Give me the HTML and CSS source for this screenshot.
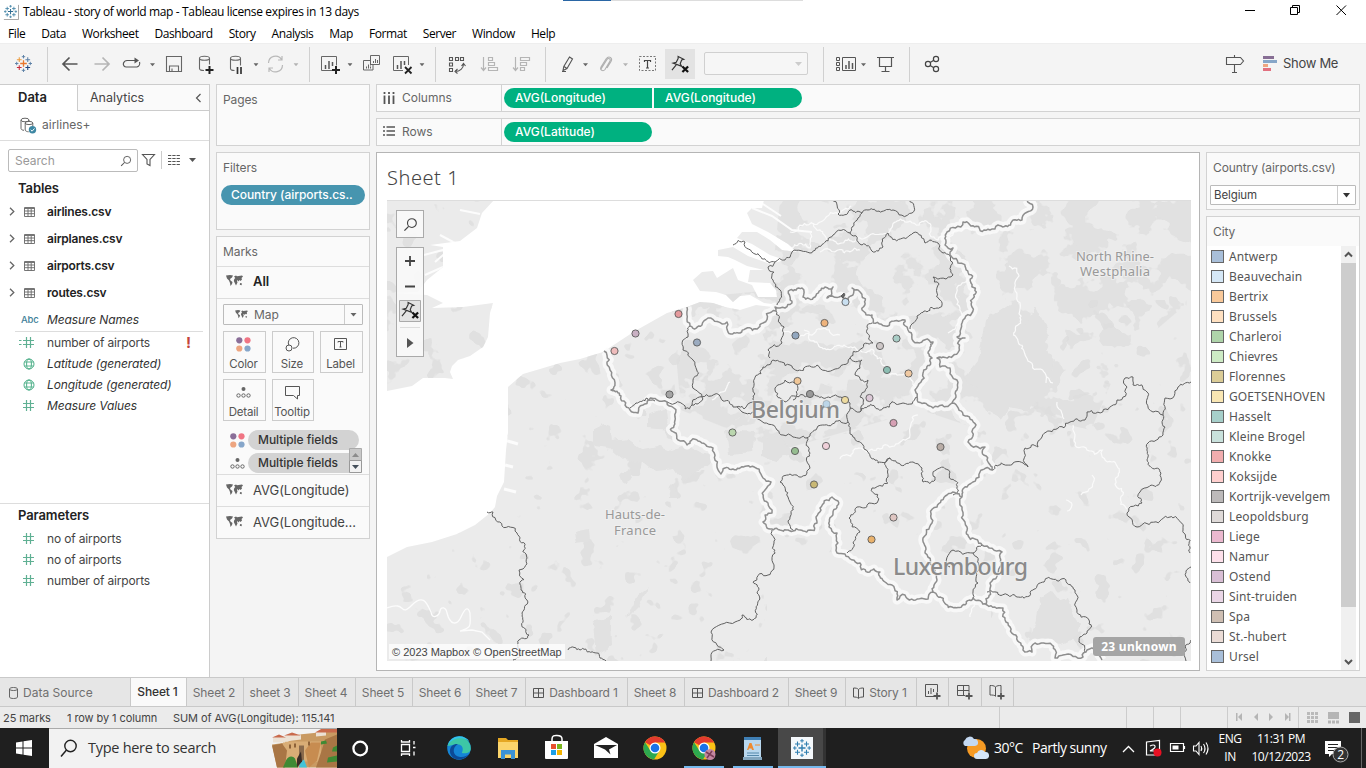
FILE: index.html
```html
<!DOCTYPE html>
<html lang="en">
<head>
<meta charset="utf-8">
<title>Tableau - story of world map</title>
<link rel="stylesheet" href="styles.css">
</head>
<body>
<svg class="defs" width="0" height="0" aria-hidden="true">
  <defs>
    <symbol id="caret" viewBox="0 0 6 4"><path d="M0 0h6L3 3.6z" fill="#666"/></symbol>
    <symbol id="table" viewBox="0 0 11 10"><path d="M.5.5h10v9H.5zM.5 1.5h10M.5 4h10M.5 6.7h10M4 2v7.500M7.200 2v7.500" fill="none" stroke="#666" stroke-width=".9"/></symbol>
    <symbol id="chev" viewBox="0 0 6 9"><path d="M1 .8l3.800 3.700L1 8.200" fill="none" stroke="#666" stroke-width="1.300"/></symbol>
    <symbol id="hash" viewBox="0 0 11 11"><path d="M3.500 0v11M7.500 0v11M0 3.500h11M0 7.500h11" fill="none" stroke="#5fb093" stroke-width="1.200"/></symbol>
    <symbol id="globe" viewBox="0 0 12 12"><g fill="none" stroke="#4caf88"><circle cx="6" cy="6" r="5"/><ellipse cx="6" cy="6" rx="2.400" ry="5"/><path d="M1.500 4h9M1.500 8h9" stroke-width=".9"/></g></symbol>
    <symbol id="world" viewBox="0 0 17 12"><path d="M0 .5l4-.5 3 .5-1 2-2 1.500.500 1.500 2 1.500-.500 2L4.500 11 4 8 3 5.500 1 3.500zM8 1.500l2-1 1 .8 5-.8 1 1-1.500 1.500.500 1.500-1.500 1.500-1-1-1 1.500-1-1.500-.500 1 .500 1.500-1.500 3L9 8.500 7.800 6l.5-2 1-1zM14 8l2 .5-.5 1.800-1.700-.600z" fill="#666"/></symbol>
    <symbol id="detail" viewBox="0 0 15 11"><circle cx="7.500" cy="2" r="2" fill="#666"/><g fill="none" stroke="#666"><circle cx="2.500" cy="8.500" r="1.700"/><circle cx="7.500" cy="8.500" r="1.700"/><circle cx="12.500" cy="8.500" r="1.700"/></g></symbol>
    <symbol id="colors" viewBox="0 0 15 15"><circle cx="3.300" cy="3.300" r="3.100" fill="#8a6e98"/><circle cx="11.500" cy="3.300" r="3.100" fill="#f07584"/><circle cx="3.300" cy="11.500" r="3.100" fill="#eda580"/><circle cx="11.500" cy="11.500" r="3.100" fill="#86a6ca"/></symbol>
    <symbol id="dash" viewBox="0 0 11 10"><path d="M.5.500h10v9H.5zM5.500.500v9M.5 5h10" fill="none" stroke="#555"/></symbol>
    <symbol id="story" viewBox="0 0 11 12"><path d="M.5 1c2 0 4 .2 5 1.500C6.500 1.200 8.500 1 10.500 1v9c-2 0-4 .2-5 1.500C4.500 10.200 2.500 10 .5 10zM5.500 2.500v8.500" fill="none" stroke="#555"/></symbol>
    <symbol id="pin" viewBox="0 0 20 20"><path d="M7.500 1.500l6 3-2.300.7-1.500 4 1.600 2.800L2.200 8.500l3.300-.8 2-4zM5.500 10.500L1 16" fill="none" stroke="#333" stroke-width="1.200"/><path d="M12 12l6 6M18 12l-6 6" stroke="#111" stroke-width="2.300"/></symbol>
    <symbol id="tlogo" viewBox="0 0 18 18"><path d="M9 5.500v7M5.500 9h7" stroke="var(--c1)" stroke-width="1.400"/><path d="M4.500 2.500v5M2 5h5" stroke="var(--c2)" stroke-width="1.100"/><path d="M13.500 2.500v5M11 5h5" stroke="var(--c3)" stroke-width="1.100"/><path d="M4.500 10.800v5M2 13.300h5" stroke="var(--c4)" stroke-width="1.100"/><path d="M13.500 10.800v5M11 13.300h5" stroke="var(--c5)" stroke-width="1.100"/><path d="M9 0v3.600M7.200 1.800h3.600M9 14.400V18M7.200 16.200h3.600M1.800 7.200v3.600M0 9h3.600M16.200 7.200v3.600M14.400 9H18" stroke="var(--c3)"/></symbol>
    <symbol id="chrome" viewBox="0 0 24 24"><circle cx="12" cy="12" r="11.500" fill="#fbc116"/><path d="M12 12L2 6.300A11.500 11.500 0 0 1 22.200 6.500H12z" fill="#e33b2e"/><path d="M2 6.300A11.500 11.500 0 0 0 11 23.500L16.500 14.500 12 12 7.300 14.500z" fill="#2da94f"/><circle cx="12" cy="12" r="5.500" fill="#fff"/><circle cx="12" cy="12" r="4.300" fill="#1a73e8"/></symbol>
    <symbol id="mag" viewBox="0 0 16 16"><circle cx="9.500" cy="6.500" r="4.700" fill="none" stroke="currentColor" stroke-width="1.200"/><path d="M6 10l-4.500 4.500" stroke="currentColor" stroke-width="1.400"/></symbol>
  </defs>
</svg>

<header class="titlebar">
  <svg class="app-icon" viewBox="0 0 18 18"><path d="M0 0h18v18H0z" fill="#fff"/><use href="#tlogo" x="1" y="1" width="15" height="15"/><path d="M17.500 1v16.500H1" fill="none" stroke="#999"/></svg>
  <span class="win-title">Tableau - story of world map - Tableau license expires in 13 days</span>
  <span class="load"></span>
  <svg class="winbtns" width="136" height="24" viewBox="1230 0 136 24"><g fill="none" stroke="#000"><path d="M1245 10.500h10M1290.500 7.500h7v7h-7zM1292.500 7.500v-2h7v7h-2M1336.500 5.500l9.500 9.500M1346 5.500l-9.500 9.500" /></g></svg>
</header>
<nav class="menubar"><span>File</span><span>Data</span><span>Worksheet</span><span>Dashboard</span><span>Story</span><span>Analysis</span><span>Map</span><span>Format</span><span>Server</span><span>Window</span><span>Help</span></nav>

<div class="toolbar">
  <svg class="logo-color" width="48" viewBox="0 43 48 41"><use href="#tlogo" x="15" y="55" width="17" height="17"/><path d="M47.500 47v35" stroke="#d0d0d0"/></svg>
  <svg width="38" viewBox="48 43 38 41"><path d="M77.500 64H63M69.500 57.500L63 64l6.500 6.500" fill="none" stroke="#555" stroke-width="1.700"/></svg>
  <svg width="31" viewBox="86 43 31 41"><path d="M94.500 64H109M102.500 57.500L109 64l-6.500 6.500" fill="none" stroke="#b5b5b5" stroke-width="1.700"/></svg>
  <svg width="43" viewBox="117 43 43 41"><path d="M136 60.500h-8.500a4 4 0 0 0-4 2.500 3 3 0 0 0 3 4H137a4 4 0 0 0 2.500-5" fill="none" stroke="#555" stroke-width="1.200"/><path d="M134.500 57.500l4.500 3-4.500 3z" fill="#555"/><use href="#caret" x="150" y="63" width="5" height="4"/></svg>
  <svg width="30" viewBox="160 43 30 41"><path d="M166.500 56.500h15v15h-15zM169.500 71v-5h9v5M172 71v-2.500" fill="none" stroke="#666" stroke-width="1.100"/></svg>
  <svg width="32" viewBox="190 43 32 41"><g fill="none" stroke="#666" stroke-width="1.100"><ellipse cx="204.500" cy="58.300" rx="5" ry="2"/><path d="M199.500 58.500v10c0 1.300 2 2 4.500 2M209.500 58.500v6"/></g><path d="M209.500 66v8M205.500 70h8" stroke="#222" stroke-width="2"/></svg>
  <svg width="40" viewBox="222 43 40 41"><g fill="none" stroke="#666" stroke-width="1.100"><ellipse cx="235.500" cy="58.300" rx="5" ry="2"/><path d="M230.500 58.500v10c0 1.300 2 2 4 2M240.500 58.500v7"/></g><path d="M237.500 67v7M241 67v7" stroke="#333" stroke-width="1.700"/><use href="#caret" x="253.500" y="63" width="5" height="4"/></svg>
  <svg width="48" viewBox="262 43 48 41"><path d="M268.500 63a7 7 0 0 1 13-3.500M282.500 65a7 7 0 0 1-13 3.500M282 56v4h-4M269 72v-4h4" fill="none" stroke="#b8b8b8" stroke-width="1.200"/><use href="#caret" x="293.500" y="63" width="5" height="4" opacity=".45"/><path d="M309.500 47v35" stroke="#d0d0d0"/></svg>
  <svg width="45" viewBox="310 43 45 41"><path d="M332 70.500h-10.500v-14h15v9" fill="none" stroke="#666"/><path d="M325.500 69v-4M329 69v-8M332.500 66v-4" stroke="#555" stroke-width="1.500"/><path d="M336 66v8M332 70h8" stroke="#222" stroke-width="2"/><use href="#caret" x="347.500" y="63" width="5" height="4"/></svg>
  <svg width="32" viewBox="355 43 32 41"><g fill="none" stroke="#666"><path d="M370.500 65.500v-10h9v9h-9M370 60.500h-6.500v9.500h9.500v-5M373.500 63v-2M375.500 63v-4M377.500 63v-3M366.500 68.500v-2M368.500 68.500v-4M370.500 68.500v-2"/></g></svg>
  <svg width="49" viewBox="387 43 49 41"><path d="M403 70.500h-9.500v-14h15v8.500" fill="none" stroke="#666"/><path d="M397.500 69v-4M401 69v-8M404.500 65v-4" stroke="#555" stroke-width="1.500"/><path d="M405 67l6.500 6.500M411.500 67l-6.500 6.500" stroke="#222" stroke-width="1.800"/><use href="#caret" x="419.500" y="63" width="5" height="4"/><path d="M435.500 47v35" stroke="#d0d0d0"/></svg>
  <svg width="37" viewBox="436 43 37 41"><path d="M449.500 57.500h3v3h-3zM455.500 57.500h3v3h-3zM460.500 57.500h3v3h-3zM449.500 63h3v3h-3zM449.500 68.500h3v3h-3zM455 71.500c5 0 8.500-3 8.500-7.500M461.500 66l2-2.500 2 2.500M457.500 69l-2.500 2.500 2.500 2" fill="none" stroke="#555" stroke-width="1.100"/></svg>
  <svg width="31" viewBox="473 43 31 41"><path d="M483.500 57v13M481 67.500l2.500 3 2.500-3M488.500 57.500h4v3h-4zM488.500 62.500h6v3h-6zM488.500 67.500h9v3h-9z" fill="none" stroke="#b5b5b5" stroke-width="1.200"/></svg>
  <svg width="42" viewBox="504 43 42 41"><path d="M515.500 57v13M513 67.500l2.500 3 2.500-3M520.500 57.500h9v3h-9zM520.500 62.500h6v3h-6zM520.500 67.500h4v3h-4z" fill="none" stroke="#b5b5b5" stroke-width="1.200"/><path d="M545.500 47v35" stroke="#d0d0d0"/></svg>
  <svg width="44" viewBox="546 43 44 41"><path d="M569.500 57l3 2-5.500 9.500-4 2 .800-4zM564 66.500l3 2M562 71.500h4" fill="none" stroke="#555" stroke-width="1.100"/><use href="#caret" x="583" y="63" width="5" height="4"/></svg>
  <svg width="42" viewBox="590 43 42 41"><path d="M601 69l6-9.500c1.500-2 4-.500 3 1.500l-5 8.500c-2 2.500-5.500.5-4-2.500l5-8c3-4 7-1 5 2.500l-4 6.500" fill="none" stroke="#b0b0b0" stroke-width="1.100"/><use href="#caret" x="623" y="63" width="5" height="4" opacity=".45"/></svg>
  <svg width="33" viewBox="632 43 33 41"><path d="M639.500 56.500h16v14h-16z" fill="none" stroke="#777" stroke-dasharray="2 1.500"/><path d="M644.500 62v-1.500h6V62M647.500 60.500v7.500M646 68h3" fill="none" stroke="#444" stroke-width="1.200"/></svg>
  <svg width="32" viewBox="665 43 32 41"><path d="M665 49h30v30h-30z" fill="#e3e3e3"/><use href="#pin" x="671" y="55" width="19" height="19"/></svg>
  <svg width="127" viewBox="697 43 127 41"><rect x="704.500" y="52.500" width="103" height="22" rx="1.500" fill="#f6f6f6" stroke="#d0d0d0"/><path d="M795 62h7l-3.500 4z" fill="#ccc"/><path d="M823.500 47v35" stroke="#d0d0d0"/></svg>
  <svg width="44" viewBox="824 43 44 41"><path d="M836.500 57.500h3v3h-3zM836.500 62.500h3v3h-3zM836.500 67.500h3v3h-3zM842.500 57.500h13v13h-13z" fill="none" stroke="#555"/><path d="M846 69v-4M849 69v-8M852.500 69v-6" stroke="#555" stroke-width="1.500"/><use href="#caret" x="861" y="63" width="5" height="4"/></svg>
  <svg width="42" viewBox="868 43 42 41"><path d="M877 57.500h17M879.500 58v8.500h12V58M885.500 66.500v5M881.500 71.500h8" fill="none" stroke="#555" stroke-width="1.200"/><path d="M909.500 47v35" stroke="#d0d0d0"/></svg>
  <svg width="40" viewBox="910 43 40 41"><g fill="none" stroke="#444" stroke-width="1.200"><circle cx="928" cy="64" r="2.600"/><circle cx="936" cy="59" r="2.600"/><circle cx="936" cy="69" r="2.600"/><path d="M930.200 62.500l3.600-2.200M930.200 65.500l3.600 2.200"/></g></svg>
  <svg class="push" width="30" viewBox="1222 43 30 41"><path d="M1226.500 57.500h14l3 3.500-3 3.500h-14zM1234.500 55v2M1234.500 65v7.500M1232 72.500h5" fill="none" stroke="#555" stroke-width="1.100"/></svg>
  <svg width="31" viewBox="1252 43 31 41"><path d="M1263 56h11v3h-11z" fill="#876e94"/><path d="M1263 60h14v3h-14z" fill="#86a6c8"/><path d="M1263 64h5v3h-5z" fill="#eda580"/><path d="M1263 68h8v3h-8z" fill="#e2707f"/></svg>
  <span class="showme">Show Me</span>
</div>

<main class="work">
  <aside class="data-pane">
    <div class="pane-tabs"><b>Data</b><span>Analytics<svg width="7" height="10" viewBox="0 0 7 10"><path d="M5.500 1L1.500 5l4 4" fill="none" stroke="#555" stroke-width="1.200"/></svg></span></div>
    <div class="source"><svg width="17" height="17" viewBox="0 0 17 17"><g fill="none" stroke="#666"><ellipse cx="5" cy="3" rx="4" ry="1.800"/><path d="M1 3v8.500c0 1 1.500 1.800 3 1.800M9 3v1"/><ellipse cx="9" cy="6" rx="3.800" ry="1.600"/><path d="M5.200 6v7c0 1 2 1.800 3.500 1.800M12.800 6v3"/></g><circle cx="12.500" cy="12.800" r="3.700" fill="#3c87a3"/><path d="M10.700 12.800l1.400 1.400 2.400-2.700" fill="none" stroke="#fff"/></svg>airlines+</div>
    <div class="searchrow"><div class="search">Search<svg width="12" height="12"><use href="#mag"/></svg></div>
      <svg width="64" height="22" viewBox="138 149 64 22"><path d="M142.500 154.500h12l-4.500 5v6l-3-1.500V159.500z" fill="none" stroke="#555" stroke-width="1.100"/><path d="M161.500 151v18" stroke="#ccc"/><path d="M168 155.500h12M168 158.500h12M168 161.500h12M168 164.500h12" stroke="#555" stroke-dasharray="3.300 1"/><path d="M189 158h7l-3.500 4z" fill="#555"/></svg></div>
    <h2 class="tables-h">Tables</h2>
    <ul class="tables">
      <li><svg width="6" height="9"><use href="#chev"/></svg><svg width="11" height="10"><use href="#table"/></svg><b>airlines.csv</b></li>
      <li><svg width="6" height="9"><use href="#chev"/></svg><svg width="11" height="10"><use href="#table"/></svg><b>airplanes.csv</b></li>
      <li><svg width="6" height="9"><use href="#chev"/></svg><svg width="11" height="10"><use href="#table"/></svg><b>airports.csv</b></li>
      <li><svg width="6" height="9"><use href="#chev"/></svg><svg width="11" height="10"><use href="#table"/></svg><b>routes.csv</b></li>
    </ul>
    <div class="field abc-row"><span class="abc">Abc</span><i>Measure Names</i></div>
    <ul class="fields">
      <li class="field"><svg class="calc" width="15" height="11" viewBox="-4 0 15 11"><use href="#hash" width="11" height="11"/><path d="M-4 3.500h2.500M-4 7.500h2.500" stroke="#5fb093"/></svg>number of airports<em class="bang">!</em></li>
      <li class="field"><svg width="12" height="12"><use href="#globe"/></svg><i>Latitude (generated)</i></li>
      <li class="field"><svg width="12" height="12"><use href="#globe"/></svg><i>Longitude (generated)</i></li>
      <li class="field"><svg width="11" height="11"><use href="#hash"/></svg><i>Measure Values</i></li>
    </ul>
    <section class="params"><h2>Parameters</h2>
      <ul><li class="field"><svg width="11" height="11"><use href="#hash"/></svg>no of airports</li>
      <li class="field"><svg width="11" height="11"><use href="#hash"/></svg>no of airports</li>
      <li class="field"><svg width="11" height="11"><use href="#hash"/></svg>number of airports</li></ul>
    </section>
  </aside>

  <section class="cards">
    <div class="card pages"><h3>Pages</h3></div>
    <div class="card filters"><h3>Filters</h3><div class="pill blue">Country (airports.cs..</div></div>
    <div class="card marks"><h3>Marks</h3>
      <div class="mark-row all"><svg width="17" height="12"><use href="#world"/></svg><b>All</b></div>
      <div class="mark-body">
        <div class="select"><svg width="13" height="9"><use href="#world"/></svg><span>Map</span><i><svg width="7" height="4"><use href="#caret"/></svg></i></div>
        <div class="btns">
          <div><svg width="15" height="15"><use href="#colors"/></svg>Color</div>
          <div><svg width="15" height="15" viewBox="0 0 15 15"><g fill="none" stroke="#555"><path d="M3.800 8.200A5.300 5.300 0 1 1 8 11.200"/><circle cx="4" cy="11" r="3"/></g></svg>Size</div>
          <div><svg width="15" height="15" viewBox="0 0 15 15"><path d="M1.500 1.500h12v11h-12zM5 5.500v-1h5v1M7.500 4.500v5.500M6.500 10h2" fill="none" stroke="#555"/></svg>Label</div>
          <div><svg width="15" height="15" viewBox="0 -2 15 15"><use href="#detail" width="15" height="11"/></svg>Detail</div>
          <div><svg width="15" height="15" viewBox="0 0 15 15"><path d="M.5 1.500h14v9h-2v3.500l-4-3.500h-8z" fill="none" stroke="#555"/></svg>Tooltip</div>
        </div>
        <div class="enc"><svg width="15" height="15"><use href="#colors"/></svg><div class="pill gray">Multiple fields</div></div>
        <div class="enc"><svg width="15" height="11"><use href="#detail"/></svg><div class="pill gray">Multiple fields</div></div>
        <svg class="spin" width="13" height="25" viewBox="0 0 13 25"><path d="M.5.5h12v12H.5z" fill="#c9c9c9" stroke="#aaa"/><path d="M3 9h7L6.500 5z" fill="#8b8b8b"/><path d="M.5 12.500h12v12H.5z" fill="#f2f2f2" stroke="#999"/><path d="M3 17h7l-3.500 4z" fill="#444f5a"/></svg>
      </div>
      <div class="mark-row"><svg width="17" height="12"><use href="#world"/></svg>AVG(Longitude)</div>
      <div class="mark-row"><svg width="17" height="12"><use href="#world"/></svg>AVG(Longitude...</div>
    </div>
  </section>

  <section class="canvas">
    <div class="shelf"><div class="label"><svg width="12" height="12" viewBox="0 0 12 12"><path d="M1.500 0v2M1.500 3.500V12M6 0v2M6 3.500V12M10.500 0v2M10.500 3.500V12" stroke="#555" stroke-width="1.800"/></svg>Columns</div><div class="pill green lft">AVG(Longitude)</div><div class="pill green rgt">AVG(Longitude)</div></div>
    <div class="shelf"><div class="label"><svg width="12" height="12" viewBox="0 0 12 12"><path d="M0 1h2M3.500 1H12M0 5h2M3.500 5H12M0 9h2M3.500 9H12" stroke="#555" stroke-width="1.700"/></svg>Rows</div><div class="pill green">AVG(Latitude)</div></div>
    <div class="lower">
      <div class="viz"><h1>Sheet 1</h1>
        <div class="map">
<svg class="geo" width="804" height="461" viewBox="387 200 804 461">
  <defs>
    <filter id="rough" filterUnits="userSpaceOnUse" x="380" y="190" width="820" height="480"><feTurbulence type="fractalNoise" baseFrequency=".1" numOctaves="2" seed="4"/><feDisplacementMap in="SourceGraphic" scale="7" xChannelSelector="R" yChannelSelector="G"/></filter>
    <filter id="mottle" color-interpolation-filters="sRGB" filterUnits="userSpaceOnUse" x="380" y="190" width="820" height="480"><feTurbulence type="fractalNoise" baseFrequency=".03 .035" numOctaves="4" seed="11"/><feColorMatrix values="0 0 0 0 .865  0 0 0 0 .865  0 0 0 0 .865  0 0 0 30 -15.300"/><feComposite in2="SourceGraphic" operator="in"/></filter>
    <filter id="speck" color-interpolation-filters="sRGB" filterUnits="userSpaceOnUse" x="380" y="190" width="820" height="480"><feTurbulence type="fractalNoise" baseFrequency=".045" numOctaves="3" seed="27"/><feColorMatrix values="0 0 0 0 .865  0 0 0 0 .865  0 0 0 0 .865  0 0 0 30 -19.500"/><feComposite in2="SourceGraphic" operator="in"/></filter>
    <clipPath id="land"><path d="M387 200H494L482 213 477 228 460 241 430 245 443 247V267L427 280 418 292 395 293 427 295 443 303 432 308 463 307 493 303 490 313 488 337 483 347 470 356 458 360 452 366 450 372 453 379 445 378H423L412 386 387 391zM387 557L407 547 432 542 457 534 475 525 490 513 495 507 497 496 504 482 506 450 508 433V387L523 374 540 369 560 363 580 359 603 352 635 331 667 313 687 307 700 302 713 303 725 307 740 310 756 305 773 307 772 304 764 303 750 295 740 296 733 302 726 295 716 292 700 291 693 280 702 272 713 271 717 278 733 268 738 280 752 285 758 297 777 297 776 290 770 283 748 282 750 270 764 270 747 266 735 260 728 257 718 256V250L733 247 748 256 770 264 785 260 770 255 752 244 737 238 742 232 757 232 770 240 782 250 797 252 788 244 768 232 760 228 752 224 747 213 752 208 762 208 764 200H1191V661H387z"/></clipPath>
  </defs>
  <path d="M387 200h804v461H387z" fill="#fff"/>
  <g clip-path="url(#land)">
    <path d="M387 200h804v461H387z" fill="#ebebeb"/>
    <path d="M780 200h411v100l-70 60-30 70-90-20-20 20-60-20-140 40-100-40-10-110 100-10z" filter="url(#mottle)" opacity=".7"/>
    <path d="M387 200h110v190H387zM500 330h180v140H500zM387 470h380v191H387zM1091 300h100v361h-200v-60l-60-60-180 20v-100l200-60 90-30z" filter="url(#speck)" opacity=".75"/>
    <g fill="#e1e1e1" filter="url(#rough)">
      <path d="M985 320l30-20 10 25 10-18 14 28-6 12 12 14-8 28-18 22-20-4-8 12-14-8-8-20-15-12 14-18zM594 430l8-8 8 3 2 16 16-2 14 10 15-3 15 5 15-6 15 8 13 4-6 10-14 4-12 10-8-12-20 2-10-8-22-3-14-12-15-2z"/>
      <path d="M574 532l15-3 1 12-14 2zM648 414l18-6 2 22-20-2zM762 440l18-4 15 18-12 2-8 6-13-6zM1040 598l12-8 8 10 8-2 6 14 6 14-8 14-12 4-12-6-20 4 8-18z"/>
      <path d="M593 622l18-6 1 30-16 10zM627 618l8-20 14-12-10 20zM726 430l30 2-3 20-24 2zM620 475l9-6 4 10-10 4zM670 487l5-3 3 14h-10z"/>
    </g>
    <g fill="none" stroke="#fafafa" stroke-width="1.200">
      <path class="wiggle" d="M1009 266L1019 276 1017 296 1021 316 1018 341 1028 361 1046 383M1047 377L1053 383M1057 402L1064 419M1073 425L1087 450 1112 462 1115 484 1127 509M790 232L820 230 860 238 890 231 910 221 970 229 995 227M811 222L851 206M790 248L810 248 810 233M820 252L860 250M804 330L844 345 884 373 910 378 915 386M918 415L910 435 880 449 840 459M970 278L960 308 948 333M970 617L975 602 985 598M712 400L730 382M1092 475L1089 489 1081 495M1066 500L1072 505 1067 511M780 327L840 335"/>
    </g>
    <g fill="none" stroke="#fcfcfc">
      <path d="M387 608c20-8 12 10 25-3s16 2 19 7c1 8 8 4 9-1s6-4 7 2c3 12 10 13 14 4s7-11 9-4c0 12 3 14-10 18l12-1 10 2 8 8" stroke-width="1.300"/>
      <path d="M424 255l30-8M425 275l18-8M440 235l15 8M460 210l20 4M435 262l14-12M752 208l20 8 20 14 20 2M757 200l24 16" stroke-width="2"/>
      <path d="M504 440l14 4M505 465l8 2M504 489l12 3" stroke-width="3"/>
    </g>
  </g>
  <g fill="none" stroke-linejoin="round">
    <use href="#national" stroke="#fbfbfb" stroke-opacity=".8" stroke-width="9"/>
    <path class="wiggle" stroke="#606060" stroke-width="1" d="M733 245L745 242 755 254 775 262 785 260 792 252 810 253 833 235 850 233 862 245 883 247 888 233 913 233 925 243 938 243M832 200L838 214 850 210 862 213 868 210 893 210 912 213 909 200M862 213L852 227 850 233M775 262L768 267 773 280 777 305M938 243L943 253 953 275 933 277 937 293 942 305 937 308 917 316 910 329M690 326L688 337 683 350 693 360 693 380 702 397 692 405 685 409 667 402M630 408L636 403 647 398 655 401M692 405L723 401 733 407 753 402 753 390 763 367 773 360 790 365 817 365 850 358 873 343 872 323M776 311L780 323 782 343 768 350 770 358M850 358L862 360 855 375 868 380 860 397 860 412 883 408 903 403 918 397M737 407L742 412 753 412 760 420 777 430 783 435 793 437 807 438 817 428 848 422 850 403 823 398 810 395 793 400M848 422L853 437 863 445 878 463 890 458 913 462 922 468 923 482 935 480 936 470 950 472 953 495M860 412L850 408M807 437L810 453 807 473 790 474 780 482 788 497 790 517 794 531M890 458L888 477 872 488 877 503 857 507 849 518 860 532 853 543 847 553M775 390L785 380 795 383 797 395 785 402 775 390M992 470L1013 463 1028 467 1025 448 1038 447 1042 437 1070 422 1085 420 1087 412 1117 400 1127 387 1125 378 1133 377 1133 385 1147 392 1153 412 1163 415 1165 398 1178 387 1191 382M1163 415L1165 427 1163 435 1148 443 1148 457 1161 473 1160 482 1140 492 1142 503 1127 513 1137 527 1170 517 1183 530 1190 553M987 592L1008 595 1052 579 1075 590 1077 610 1089 620 1087 633 1079 642 1085 652M950 567L953 550 973 553 982 545M973 553L977 557 978 583 973 592 973 598M1191 567L1186 571 1190 583M1191 640L1186 661M487 512L493 512 517 533 527 558 519 570 521 590 527 600 522 613 529 635 519 640 513 660M568 650L580 650 600 658 606 661M772 530L774 543 773 563 753 582 757 593 753 620 742 615 735 622 714 628 717 645 724 650 711 657 711 661"/>
    <g stroke="#8e8e8e" stroke-width="1.500"><path id="national-line" class="hidden"/></g>
    <use href="#national" stroke="#8e8e8e" stroke-width="1.500"/>
  </g>
  <defs><path id="national" class="wiggle" d="M604 351L610 370 611 390 621 396 630 410 638 413 643 405 657 400 667 402 675 417 678 440 687 445 698 441 713 448 717 467 721 474 725 468 750 467 763 478 771 482 765 490 768 503 772 513 763 522 767 528 793 531 817 523 820 508 832 497 838 501 833 513 829 527 837 533 837 553 845 554 860 563 880 572 885 582 892 585 897 600 905 595 933 592 952 607 973 598 987 605 1003 608 1008 623 1017 637 1023 650 1032 652 1035 643 1052 645 1055 658 1063 655 1083 657 1087 650 1097 650 1102 660M933 592L937 580 935 570 925 553 923 538 932 523 937 507 947 495 962 497 967 487 980 472 992 470 987 460 985 447 968 442 976 425 963 415 952 403 957 390 957 380 950 368 940 367 937 358 943 357 965 338 957 337 963 320 972 307 971 283 958 263 953 248 945 245 947 232 963 222 990 230 998 225 1022 220 1033 207 1027 200M952 403L933 408 918 402 915 390 923 373 928 353 933 342 908 330 905 320 873 323 872 315 862 310 858 290 852 288 848 300 827 298 833 287 825 287 815 297 803 297 802 288 790 290 792 303 785 308 775 307 776 311 763 323 740 333 728 332 727 322 708 318 702 325 690 326 687 307M962 497L962 507 967 527 982 545 1002 552 1000 567 990 583 987 605"/></defs>
  <g class="maplabels"><text x="751" y="418" font-size="23" textLength="89">Belgium</text><text x="893" y="575" font-size="23" textLength="135">Luxembourg</text></g>
  <g class="maplabels small"><text x="1076" y="261" textLength="78">North Rhine-</text><text x="1080" y="276" textLength="70">Westphalia</text><text x="605" y="519" textLength="60">Hauts-de-</text><text x="614" y="535" textLength="42">France</text></g>
  <g stroke="#555" stroke-opacity=".85" stroke-width="1">
    <circle cx="678.500" cy="314" r="3.600" fill="#e59a9d"/><circle cx="635.500" cy="333.500" r="3.600" fill="#c9b0c3"/><circle cx="614.500" cy="351" r="3.600" fill="#efbcbc"/><circle cx="697" cy="342.500" r="3.600" fill="#9babc0"/><circle cx="669.500" cy="394.500" r="3.600" fill="#a5a5a5"/><circle cx="795.500" cy="335.500" r="3.600" fill="#93a8c0"/><circle cx="824.500" cy="323" r="3.600" fill="#eeb37c"/><circle cx="845.500" cy="302" r="3.600" fill="#c9dff0"/><circle cx="880" cy="346" r="3.600" fill="#cdc7c7"/><circle cx="896.500" cy="338.500" r="3.600" fill="#a9cdc6"/><circle cx="887" cy="370" r="3.600" fill="#8cbdb2"/><circle cx="908.500" cy="373.500" r="3.600" fill="#f0c9a2"/><circle cx="797.500" cy="381" r="3.600" fill="#f1c797"/><circle cx="810" cy="394" r="3.600" fill="#999"/><circle cx="826.500" cy="404" r="3.600" fill="#bcd5e8" stroke-opacity=".3"/><circle cx="845" cy="400" r="3.600" fill="#eedba0"/><circle cx="869.500" cy="398" r="3.600" fill="#dcc9d7"/><circle cx="893.500" cy="423" r="3.600" fill="#d6a0b4"/><circle cx="732.500" cy="432.500" r="3.600" fill="#bad6ae"/><circle cx="795" cy="451" r="3.600" fill="#96bd90"/><circle cx="826" cy="446" r="3.600" fill="#efd0d9"/><circle cx="940.500" cy="447" r="3.600" fill="#b9ada6"/><circle cx="814" cy="484.500" r="3.600" fill="#c9b874"/><circle cx="893.500" cy="517.500" r="3.600" fill="#dfc6c2"/><circle cx="871.500" cy="539.500" r="3.600" fill="#eab26c"/>
    <path d="M841 296l3-3 1 2-2 3z" fill="#666"/>
  </g>
  <path d="M387 200.500h804" stroke="#ddd"/>
</svg>
          <div class="mapctl find"><svg width="15" height="15"><use href="#mag"/></svg></div>
          <div class="mapctl zoom"><svg width="28" height="110" viewBox="396 247 28 110"><path d="M410 256v10M405 261h10M405 286.500h10" stroke="#444" stroke-width="1.800"/><path d="M399.500 300.500h21v21h-21z" fill="#e3e3e3" stroke="#aaa"/><use href="#pin" x="401" y="301" width="19" height="19"/><path d="M400 327.500h20" stroke="#ddd"/><path d="M407 338l6.500 5-6.500 5z" fill="#555"/></svg></div>
          <div class="attrib">© 2023 Mapbox © OpenStreetMap</div>
          <div class="unknown">23 unknown</div>
        </div>
      </div>
      <aside class="legend">
        <div class="card country"><h3>Country (airports.csv)</h3><div class="select"><span>Belgium</span><i><svg width="8" height="5" viewBox="0 0 8 5"><path d="M0 0h7L3.500 4.500z" fill="#333"/></svg></i></div></div>
        <div class="card city"><h3>City</h3>
          <div class="citybody"><ul>
            <li><i style="background:#a9bfd9"></i>Antwerp</li><li><i style="background:#d5e7f6"></i>Beauvechain</li><li><i style="background:#f9c99a"></i>Bertrix</li><li><i style="background:#ffe0c0"></i>Brussels</li><li><i style="background:#afd4aa"></i>Charleroi</li><li><i style="background:#cdeac4"></i>Chievres</li><li><i style="background:#dbcc97"></i>Florennes</li><li><i style="background:#f9e6b3"></i>GOETSENHOVEN</li><li><i style="background:#a7cfca"></i>Hasselt</li><li><i style="background:#c9e1dc"></i>Kleine Brogel</li><li><i style="background:#f1adae"></i>Knokke</li><li><i style="background:#ffcfce"></i>Koksijde</li><li><i style="background:#bdbaba"></i>Kortrijk-vevelgem</li><li><i style="background:#dfdad8"></i>Leopoldsburg</li><li><i style="background:#ebb9cf"></i>Liege</li><li><i style="background:#fde0ea"></i>Namur</li><li><i style="background:#d9bfd5"></i>Ostend</li><li><i style="background:#ead6e6"></i>Sint-truiden</li><li><i style="background:#cfbfb3"></i>Spa</li><li><i style="background:#ebdcd6"></i>St.-hubert</li><li><i style="background:#a9bfd9"></i>Ursel</li>
          </ul>
          <div class="scroll"><svg width="15" height="17" viewBox="0 0 15 17"><path d="M4 10.500L7.500 7l3.500 3.500" fill="none" stroke="#555" stroke-width="2"/></svg><div class="thumb"></div><svg width="15" height="17" viewBox="0 0 15 17"><path d="M4 7l3.500 3.500L11 7" fill="none" stroke="#555" stroke-width="2"/></svg></div></div>
        </div>
      </aside>
    </div>
  </section>
</main>

<nav class="tabs">
  <span class="ds"><svg width="9" height="12" viewBox="0 0 9 12"><path d="M.5 2v8c0 2 8 2 8 0V2c0-2-8-2-8 0s8 2 8 0" fill="none" stroke="#666"/></svg>Data Source</span>
  <span class="t56 on">Sheet 1</span><span class="t57">Sheet 2</span><span class="t55">sheet 3</span><span class="t57">Sheet 4</span><span class="t57">Sheet 5</span><span class="t57">Sheet 6</span><span class="t56">Sheet 7</span>
  <span class="t102"><svg width="11" height="10"><use href="#dash"/></svg>Dashboard 1</span><span class="t57">Sheet 8</span><span class="t104"><svg width="11" height="10"><use href="#dash"/></svg>Dashboard 2</span><span class="t57">Sheet 9</span><span class="t71"><svg width="11" height="12"><use href="#story"/></svg>Story 1</span>
  <span class="t32"><svg width="16" height="16" viewBox="0 0 16 16"><path d="M9 12.500H.5V.5h12v7.500M3.500 10V7M6 10V4M8.500 8V5" fill="none" stroke="#555"/><path d="M12 8.500v7M8.500 12h7" stroke="#555" stroke-width="1.800"/></svg></span>
  <span class="t32"><svg width="16" height="16" viewBox="0 0 16 16"><path d="M8 11.500H.5V1.500h11.500V8M6.500 1.500v10M.5 6.500H12" fill="none" stroke="#555"/><path d="M12 8.500v7M8.500 12h7" stroke="#555" stroke-width="1.800"/></svg></span>
  <span class="t32"><svg width="16" height="16" viewBox="0 0 16 16"><path d="M7 12.500c-1-1.500-4-1.500-6-1.500V1.500c2 0 4 0 5.500 1.500C8 1.500 10 1.500 12 1.500V8M6.500 3v9" fill="none" stroke="#555"/><path d="M12 8.500v7M8.500 12h7" stroke="#555" stroke-width="1.800"/></svg></span>
</nav>
<footer class="status"><span class="s1">25 marks</span><span class="s2">1 row by 1 column</span><span class="s3">SUM of AVG(Longitude): 115.141</span>
  <svg width="367" height="21" viewBox="999 707 367 21"><path d="M999.500 707v21M1126.500 707v21M1153.500 707v21M1180.500 707v21M1227.500 707v21M1298.500 707v21" stroke="#ccc"/><g fill="#b5b5b5"><path d="M1236 713h1.500v8h-1.500zM1242 713v8l-4-4zM1258 713v8l-4-4zM1269 713v8l4-4zM1285 713v8l4-4zM1289 713h1.500v8h-1.500z"/><path d="M1307 712h11v11h-11z" opacity=".9"/><path d="M1328 712h11v7h-11zM1328 720.500h3v3h-3zM1332 720.500h3v3h-3zM1336 720.500h3v3h-3z"/></g><path d="M1310.500 711v13M1314.500 711v13M1306 715.500h13M1306 719.500h13" stroke="#ebebeb"/><path d="M1349 712h11v11h-11z" fill="#666"/></svg></footer>

<footer class="taskbar">
  <svg width="48" height="40" viewBox="0 728 48 40"><path d="M16 742.500l6.500-1v6H16zM23.500 741.300l8.500-1.300v7.500h-8.500zM16 748.500h6.500v6l-6.500-1zM23.500 748.500h8.500v7.500l-8.500-1.300z" fill="#fff"/></svg>
  <div class="tsearch"><svg width="18" height="20" viewBox="0 0 18 20"><circle cx="10.500" cy="7" r="5.700" fill="none" stroke="#222" stroke-width="1.400"/><path d="M6.500 11L1 17.500" stroke="#222" stroke-width="1.500"/></svg><span>Type here to search</span>
    <svg class="scene" width="66" height="38" viewBox="270 729 66 38"><path d="M271 744l15-2 12-8 20-2 18-3v38h-60z" fill="#c99a62"/><path d="M282 741h38v20h-38z" fill="#d9ad76"/><path d="M271 745l10-2 5 7-2 17h-8zM336 734l-12 5-3 10-6 18h21z" fill="#a97645"/><path d="M298 745h5v16h-5z" fill="#8a6a4c"/><path d="M304 750l6-8 10 0-4 18-8 7z" fill="#c78c50"/><path d="M272 737l12-1v6h-12zM284 735l16-1v5l-16 2zM315 732l10-3v6l-10 1z" fill="#ece1d4"/><path d="M271 737l7-3 7 3zM283 735l8-3 9 3zM314 732l7-4h15v4z" fill="#c96a4c"/><path d="M320 741l5-1 1 3-6 1zM332 747l4-2v6h-5zM327 757l9-2v6l-10 1zM285 760c2-5 7-5 9-2l3 9h-15z" fill="#3f8a34"/><path d="M299 762l4-3 3 8h-8z" fill="#43c3d8"/><path d="M296 758l4-7 1 10-5 6z" fill="#3a2c26"/><path d="M288 744h2v4h-2zM293 743h2v4h-2zM307 741h2v4h-2z" fill="#8e6238"/></svg></div>
  <svg class="apps" width="489" height="40" viewBox="337 728 489 40">
    <path d="M778 728h48v40h-48z" fill="#484848"/><path d="M823 728h3v40h-3z" fill="#333"/><path d="M684 766h40v2h-40zM733 766h40v2h-40zM778 766h48v2h-48z" fill="#76b9ed"/>
    <circle cx="360.200" cy="748.500" r="6.800" fill="none" stroke="#fff" stroke-width="2.300"/>
    <path d="M401.500 744.500h8v7h-8zM401.500 740v2h8v-2M401.500 756v-2h8v2M414 741v3.500M414 751.500v4M413 747.500h2.500" fill="none" stroke="#fff" stroke-width="1.300"/>
    <circle cx="459" cy="748" r="11.800" fill="#1585d6"/><path d="M447.500 746a11.800 11.800 0 0 1 23.300 3c-.5 4-5 5-9 4 2-4 1-8-3.500-8.500-5-.5-8 1-10.800 1.500z" fill="#3dc7a6"/><path d="M447.500 746a12 12 0 0 1 12-9.800c4 0 8 2 10 5-7-5-18-4-22 4.800z" fill="#34c3ea"/><path d="M458 744c-6 3-6 12 2 13 4 .5 7-1 9.500-3.500-3 5-10 7.500-15 5-7-4-6-15 3.500-14.500z" fill="#0c4a97"/>
    <path d="M498 738h8l2 2h10v18h-20z" fill="#e5a723"/><path d="M498 742h20v16h-20z" fill="#fbd46b"/><path d="M501 759v-9h14v9h-4v-4.500h-6V759z" fill="#3b92d6"/>
    <path d="M552 741v-2c0-4 3-3.500 5-3.500s5 0 5 3.500v2" fill="none" stroke="#fff" stroke-width="1.500"/><path d="M545 741h23v17q0 1-1 1h-21q-1 0-1-1z" fill="#fff"/><path d="M551 744h5v5h-5z" fill="#e8502e"/><path d="M557 744h5v5h-5z" fill="#7ab51d"/><path d="M551 750h5v5h-5z" fill="#1d9fe6"/><path d="M557 750h5v5h-5z" fill="#f5b400"/>
    <path d="M594 744l12-7 12 7v14h-24z" fill="#fff"/><path d="M595 745h22l-8 4.500 1.500 5-5.500-5z" fill="#222"/>
    <use href="#chrome" x="643" y="736" width="24" height="24"/><use href="#chrome" x="692" y="736" width="24" height="24"/>
    <circle cx="710" cy="754.500" r="5.500" fill="#c487a0"/><path d="M706 752l8 5M707 758l5-7" stroke="#7b3d58" stroke-width="1.500"/>
    <path d="M744 737h17v21h-17z" fill="#b9d7ee"/><path d="M744 737h17v3h-17z" fill="#3f7fb5"/><path d="M747 753h12M747 755.500h12" stroke="#5588ab"/><path d="M743 757h19v3h-19z" fill="#83a6bf"/><path d="M747 750l2.500-7h2l2.500 7h-2l-.5-1.500h-2.500l-.5 1.500z" fill="#ef8a2f"/><path d="M755 745h5" stroke="#ef8a2f"/>
    <path d="M791 737h22v22h-22z" fill="#f4f8fb"/><use href="#tlogo" class="blue-logo" x="793" y="739" width="18" height="18"/>
  </svg>
  <div class="tray"><svg width="27" height="28" viewBox="0 0 27 28"><circle cx="14.500" cy="14.500" r="9.500" fill="#f59a24"/><path d="M3 12a3.500 3.500 0 0 1 0-6 5 5 0 0 1 9-1 3.500 3.500 0 0 1 1 7z" fill="#c4d9f2"/><path d="M15 25a3 3 0 0 1 0-6 4.500 4.500 0 0 1 8-1 3.500 3.500 0 0 1 1 7z" fill="#d5e5f7"/></svg><span class="wx">30°C</span><span class="wx2">Partly sunny</span>
  <svg width="92" height="40" viewBox="1120 728 92 40"><path d="M1123 752l5.500-5.500 5.500 5.500" fill="none" stroke="#fff" stroke-width="1.300"/><path d="M1146.500 742l13-1.500v14.500h-13zM1150 746q4-2 5 0t-5 5h4" fill="none" stroke="#fff" stroke-width="1.200"/><circle cx="1157.500" cy="752.500" r="4" fill="#e81123"/><path d="M1170.500 743.500h13v8h-13zM1184.500 746v3" fill="none" stroke="#fff" stroke-width="1.200"/><path d="M1172.500 745.500h6v4h-6z" fill="#fff"/><path d="M1193.500 746h2.500l3-3.500v12l-3-3.500h-2.500zM1201 746q1.500 2.500 0 5M1203.500 744q3 4.500 0 9M1206 742.500q4 6 0 12" fill="none" stroke="#fff" stroke-width="1.100"/></svg>
  <div class="lang">ENG<br>IN</div><div class="clock">11:31 PM<br>10/12/2023</div>
  <svg class="notif" width="42" height="40" viewBox="1324 728 42 40"><path d="M1325 741h16v13h-9l-3 3v-3h-4z" fill="#fff"/><path d="M1328 744.500h10M1328 747.500h10M1328 750.500h6" stroke="#222"/><circle cx="1340.500" cy="754.500" r="7.500" fill="#333" stroke="#aaa"/><text x="1337.200" y="759" font-size="12">2</text><path d="M1361.500 728v40" stroke="#666"/></svg></div>
</footer>
<script src="borders.js"></script>
</body>
</html>
```
FILE: borders.js
```js
// Adds natural irregularity to map lines by midpoint displacement.
let seed = 7;
function rand() {
  seed = (seed * 16807) % 2147483647;
  return seed / 2147483647 - 0.5;
}

function split(a, b, out) {
  const dx = b[0] - a[0];
  const dy = b[1] - a[1];
  if (Math.hypot(dx, dy) < 3) {
    out.push(b);
    return;
  }
  const k = rand() * 0.55;
  const mid = [(a[0] + b[0]) / 2 - dy * k, (a[1] + b[1]) / 2 + dx * k];
  split(a, mid, out);
  split(mid, b, out);
}

document.querySelectorAll('path.wiggle').forEach((path) => {
  const lines = path.getAttribute('d').split('M').filter(Boolean);
  const d = lines.map((line) => {
    const n = line.match(/[\d.]+/g).map(Number);
    const out = [[n[0], n[1]]];
    for (let i = 2; i < n.length; i += 2) {
      split([n[i - 2], n[i - 1]], [n[i], n[i + 1]], out);
    }
    return 'M' + out.map((p) => p[0].toFixed(1) + ' ' + p[1].toFixed(1)).join('L');
  });
  path.setAttribute('d', d.join(''));
});
```
FILE: styles.css
```css
* { box-sizing: border-box; }
body { margin: 0; width: 1366px; height: 768px; overflow: hidden; display: flex; flex-direction: column; background: #f4f4f4; font: 12px/16px Inter, "Open Sans", sans-serif; color: #444; white-space: nowrap; }
ul { list-style: none; margin: 0; padding: 0; }
h1, h2, h3 { margin: 0; font: inherit; }
svg { flex: none; display: block; }
.defs { position: absolute; }

.titlebar { height: 24px; flex: none; background: #fff; display: flex; align-items: center; color: #000; font-family: "Open Sans", sans-serif; position: relative; }
.app-icon { width: 16px; height: 16px; margin: 0 4px 0 3px; --c1: #2f6c92; --c2: #3b7fa3; --c3: #3b7fa3; --c4: #3b7fa3; --c5: #3b7fa3; }
.win-title { letter-spacing: -.36px; }
.winbtns { margin-left: auto; }
.load { position: absolute; left: 563px; top: 0; width: 240px; height: 1px; background: linear-gradient(90deg, #2a66a5 48px, #ddd 48px); }
.menubar { height: 19px; flex: none; background: #fff; display: flex; gap: 16px; padding: 1px 0 0 8px; color: #000; font-family: "Open Sans", sans-serif; letter-spacing: -.42px; line-height: 18px; }

.toolbar { height: 41px; flex: none; display: flex; border-top: 1px solid #eee; }
.toolbar svg { height: 41px; margin-top: -1px; }
.logo-color { --c1: #e8762c; --c2: #eb9a3c; --c3: #5b7fa6; --c4: #c72b3b; --c5: #1f447e; }
.toolbar .push { margin-left: auto; }
.showme { width: 83px; font-size: 13px; letter-spacing: -.3px; line-height: 39px; color: #444; }

.work { height: 593px; flex: none; display: flex; }
.data-pane { width: 210px; flex: none; background: #fff; border-right: 1px solid #ccc; border-top: 1px solid #ccc; display: flex; flex-direction: column; color: #222; }
.pane-tabs { display: flex; height: 26px; }
.pane-tabs b { width: 77px; padding-left: 18px; font-size: 13px; font-weight: 600; line-height: 25px; color: #222; }
.pane-tabs span { flex: 1; display: flex; justify-content: space-between; align-items: center; font-size: 12.500px; border: solid #ccc; border-width: 0 0 1px 1px; background: #fafafa; padding: 0 7px 0 12px; color: #444; }
.source { height: 30px; display: flex; align-items: center; gap: 5px; padding: 0 0 1px 20px; border-bottom: 1px solid #ddd; color: #666; }
.searchrow { display: flex; padding: 8px 0 0 8px; height: 39px; }
.search { width: 130px; height: 23px; border: 1px solid #bbb; border-radius: 2px; display: flex; align-items: center; justify-content: space-between; padding: 0 5px 0 6px; color: #999; }
.search svg { color: #555; }
.tables-h, .params h2 { font-size: 13px; font-weight: 600; color: #222; padding-left: 18px; letter-spacing: -.1px; }
.tables-h { height: 18px; line-height: 17px; }
.tables li { height: 27px; display: flex; align-items: center; padding-left: 9px; }
.tables svg + svg { margin: 0 12px 0 9px; }
.tables b { font-weight: 600; color: #222; letter-spacing: -.2px; }
.field { height: 21px; display: flex; align-items: center; padding-left: 23px; color: #444; letter-spacing: -.15px; }
.field svg { margin-right: 13px; }
.field svg[width="12"] { margin-right: 12px; }
.field svg.calc { margin-left: -4px; }
.field i { color: #333; letter-spacing: -.1px; }
.abc-row { margin-top: 3px; padding-left: 21px; height: 22px; }
.abc { width: 26px; color: #3f8199; font-size: 9.500px; font-weight: 500; }
.bang { margin-left: 36px; color: #c4443a; font-style: normal; font-weight: 700; font-size: 15px; }
.fields { background: linear-gradient(#ddd, #ddd) 15px 0 / 188px 1px no-repeat; padding-top: 1px; }
.params { margin-top: auto; height: 174px; border-top: 1px solid #ddd; }
.params h2 { line-height: 23px; height: 24px; }

.cards { width: 154px; margin-left: 6px; flex: none; display: flex; flex-direction: column; gap: 6px; }
.card { border: 1px solid #d2d2d2; background: #fafafa; }
.card h3 { color: #666; padding-left: 6px; line-height: 30px; height: 31px; letter-spacing: -.1px; }
.pages { height: 62px; }
.filters { height: 78px; }
.marks { height: 303px; }
.marks h3 { height: 29px; }
.pill { height: 20px; border-radius: 10px; line-height: 20px; padding-left: 11px; font-weight: 500; color: #fff; }
.blue { background: #4795af; margin: 1px 4px 0; padding-left: 10px; letter-spacing: -.05px; }
.gray { background: #d3d3d3; color: #333; width: 111px; padding-left: 10px; letter-spacing: -.05px; }
.green { background: #00b180; width: 148px; }
.lft { border-radius: 10px 0 0 10px; }
.rgt { border-radius: 0 10px 10px 0; margin-left: 2px; }
.mark-row { height: 32px; border-top: 1px solid #ddd; display: flex; align-items: center; gap: 10px; padding: 0 0 1px 9px; font-size: 13px; color: #444; letter-spacing: -.05px; }
.mark-row b { font-weight: 600; color: #222; }
.all { padding-bottom: 3px; }
.mark-body { height: 176px; border-top: 1px solid #ddd; padding: 5px 6px 0; position: relative; overflow: hidden; }
.select { display: flex; align-items: center; height: 21px; border: 1px solid #bbb; border-radius: 1px; }
.mark-body .select { gap: 6px; padding-left: 11px; color: #666; margin-bottom: 6px; }
.select i { margin-left: auto; width: 18px; height: 19px; border-left: 1px solid #ccc; display: grid; place-items: center; }
.btns { display: grid; grid-template-columns: 43px 42px 43px; gap: 6px; height: 90px; margin-bottom: 9px; }
.btns div { border: 1px solid #ccc; height: 42px; display: flex; flex-direction: column; align-items: center; padding: 5px 2px 0 0; gap: 2px; font-size: 11.500px; color: #555; letter-spacing: -.2px; }
.btns div svg { margin-bottom: 2px; }
.enc { display: flex; align-items: center; gap: 3px; padding-left: 7px; height: 20px; margin-bottom: 3px; }
.spin { position: absolute; right: 7px; top: 149px; }

.canvas { flex: 1; margin: 0 6px; display: flex; flex-direction: column; gap: 6px; }
.shelf { height: 28px; border: 1px solid #d2d2d2; background: #fafafa; display: flex; align-items: center; }
.shelf .label { width: 125px; height: 26px; border-right: 1px solid #d2d2d2; display: flex; align-items: center; gap: 7px; padding-left: 6px; margin-right: 2px; color: #666; }
.lower { flex: 1; display: flex; gap: 6px; margin-bottom: 6px; }
.viz { width: 824px; border: 1px solid #b5b5b5; background: #fff; padding-left: 10px; }
.viz h1 { height: 47px; font: 300 20px/49px "Noto Sans", "Open Sans", sans-serif; color: #444; letter-spacing: .55px; }
.map { position: relative; width: 804px; height: 461px; }
.mapctl { position: absolute; left: 9px; width: 28px; border: 1px solid #aaa; background: rgba(250, 250, 250, .9); color: #444; }
.find { top: 10px; height: 28px; display: grid; place-items: center; }
.zoom { top: 47px; height: 110px; }
.zoom svg { margin: -1px; }
.attrib { position: absolute; left: 2px; bottom: 2px; height: 15px; line-height: 16px; width: 176px; padding-left: 3px; font-family: "Liberation Sans", sans-serif; font-size: 11px; background: rgba(255, 255, 255, .75); color: #444; }
.unknown { position: absolute; right: 6px; bottom: 5px; width: 92px; height: 19px; border-radius: 3px; text-align: center; font: 700 12px/19px "Noto Sans", sans-serif; letter-spacing: .25px; color: #fff; background: #a5a5a5; }
.maplabels { font-family: "Noto Sans", sans-serif; font-weight: 500; fill: #8a8a8a; stroke: #f2f2f2; stroke-opacity: .7; stroke-width: 2px; paint-order: stroke; }
.small { font-size: 13px; font-weight: 400; fill: #999; }
.legend { width: 154px; display: flex; flex-direction: column; gap: 6px; }
.country { height: 58px; }
.country h3 { height: 32px; }
.country .select { height: 20px; margin: 0 3px; background: #fff; padding-left: 3px; font-size: 11.500px; letter-spacing: -.1px; }
.country .select i { height: 18px; }
.city { flex: 1; }
.city h3 { height: 29px; }
.citybody { display: flex; justify-content: space-between; background: #fff; height: 424px; padding-right: 3px; }
.citybody ul { font: 12px/20px "Noto Sans", sans-serif; letter-spacing: .12px; color: #555; padding-top: 1px; }
.citybody li { height: 20px; display: flex; align-items: center; gap: 5px; padding-left: 4px; }
.citybody li i { width: 13px; height: 13px; border: 1px solid #666; margin-top: -1px; }
.scroll { width: 15px; background: #f0f0f0; display: flex; flex-direction: column; }
.thumb { height: 344px; background: #cdcdcd; margin-bottom: auto; }

.tabs { height: 30px; flex: none; display: flex; background: #e6e6e6; border: solid #c9c9c9; border-width: 1px 0; color: #707070; letter-spacing: -.15px; }
.tabs span { display: flex; align-items: center; justify-content: center; gap: 5px; border-right: 1px solid #c9c9c9; padding: 1px 2px 0 0; }
.tabs .ds { width: 131px; justify-content: flex-start; padding-left: 9px; letter-spacing: 0; }
.tabs .on { background: #fafafa; color: #333; font-weight: 500; padding-top: 0; }
.tabs .t32 { padding: 0; width: 32.300px; }
.t55 { width: 55px; } .t56 { width: 56px; } .t57 { width: 57px; } .t71 { width: 71px; } .t102 { width: 102px; } .t104 { width: 104px; }
.status { height: 21px; flex: none; display: flex; background: #ebebeb; font-size: 11px; line-height: 22px; padding-left: 3px; color: #444; letter-spacing: -.08px; }
.s1 { width: 64px; } .s2 { width: 106px; }
.status svg { margin-left: auto; }
.taskbar { height: 40px; flex: none; background: #1f1f1f; display: flex; color: #fff; font-family: "Open Sans", sans-serif; }
.tsearch { width: 288px; margin-left: 1px; background: #f2f2f2; border-top: 1px solid #aaa; display: flex; align-items: center; padding-left: 11px; color: #333; font-size: 14.500px; }
.tsearch span { margin: 0 0 1px 10px; letter-spacing: -.28px; }
.tsearch .scene { margin-left: auto; height: 39px; }
.blue-logo { --c1: #2f7eb0; --c2: #2f7eb0; --c3: #2f7eb0; --c4: #2f7eb0; --c5: #2f7eb0; }
.tray { margin-left: auto; display: flex; align-items: center; font-size: 14px; }
.wx { width: 38px; margin-left: 5px; letter-spacing: -.5px; }
.wx2 { width: 88px; letter-spacing: -.5px; }
.lang, .clock { font-size: 12px; line-height: 18px; letter-spacing: -.45px; text-align: center; }
.lang { width: 36px; } .clock { width: 66px; }
.notif { margin-left: 10px; fill: #fff; }
```
